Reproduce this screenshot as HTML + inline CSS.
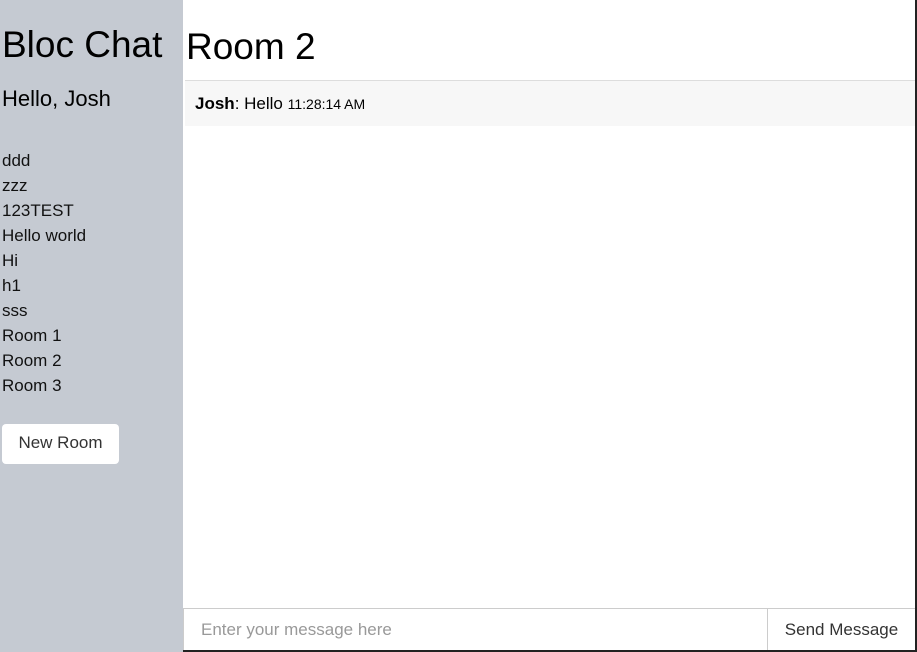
<!DOCTYPE html>
<html><head><meta charset="utf-8"><style>
*{margin:0;padding:0;box-sizing:border-box}
body{width:917px;height:652px;overflow:hidden;background:#fff;font-family:"Liberation Sans",Arial,sans-serif;position:relative}
.side{position:absolute;left:0;top:0;width:183px;height:652px;background:#c5cad2}
.side h1{position:absolute;left:2px;top:24px;font-size:37px;font-weight:normal;color:#000;white-space:nowrap}
.side h2{position:absolute;left:2px;top:86px;font-size:22px;font-weight:normal;color:#000}
.rooms{position:absolute;left:2px;top:148px;font-size:17px;line-height:25px;color:#111}
.btn{position:absolute;left:2px;top:424px;width:117px;height:40px;background:#fff;border-radius:4px;font-size:17px;color:#333;text-align:center;line-height:38px}
.main h1{position:absolute;left:186px;top:26px;font-size:37px;font-weight:normal;color:#000}
.hr{position:absolute;left:185px;top:80px;width:730px;height:1px;background:#ddd}
.msg{position:absolute;left:185px;top:81px;width:730px;height:45px;background:#f7f7f7;font-size:17px;line-height:46px;padding-left:10px;color:#000}
.msg small{font-size:14px}
.inp{position:absolute;left:183px;top:608px;width:585px;height:43px;border-top:1px solid #ccc;border-left:1px solid #ccc;font-size:17px;color:#999;padding-left:17px;line-height:42px}
.send{position:absolute;left:767px;top:608px;width:148px;height:43px;border-top:1px solid #ccc;border-left:1px solid #ccc;font-size:17px;color:#333;text-align:center;line-height:42px}
.rb{position:absolute;left:915px;top:0;width:2px;height:652px;background:#222}
.bb{position:absolute;left:183px;top:650px;width:734px;height:2px;background:#222}
</style></head><body>
<div class="side">
<h1>Bloc Chat</h1>
<h2>Hello, Josh</h2>
<div class="rooms">ddd<br>zzz<br>123TEST<br>Hello world<br>Hi<br>h1<br>sss<br>Room 1<br>Room 2<br>Room 3</div>
<div class="btn">New Room</div>
</div>
<div class="main"><h1>Room 2</h1></div>
<div class="hr"></div>
<div class="msg"><b>Josh</b>: Hello <small>11:28:14 AM</small></div>
<div class="inp">Enter your message here</div>
<div class="send">Send Message</div>
<div class="rb"></div><div class="bb"></div>
</body></html>
